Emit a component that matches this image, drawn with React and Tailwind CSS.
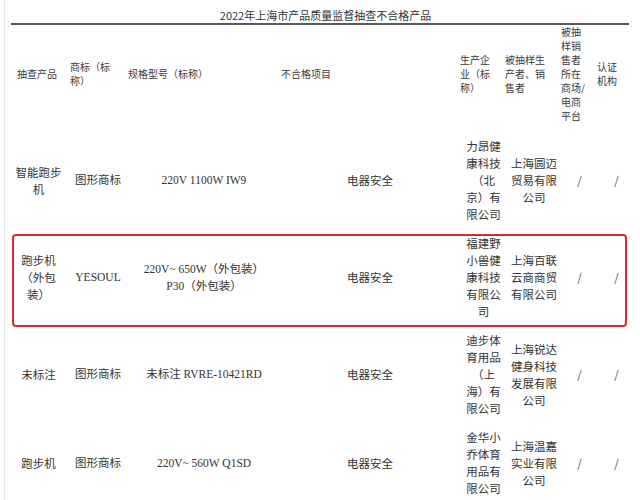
const SANS = { fontFamily: '"Noto Sans CJK SC", "Noto Sans", sans-serif' };

const rows = [
  {
    product: '智能跑步机',
    brand: '图形商标',
    spec: ['220V 1100W IW9'],
    item: '电器安全',
    maker: '力昂健康科技（北京）有限公司',
    seller: '上海圆迈贸易有限公司',
  },
  {
    product: '跑步机（外包装）',
    brand: 'YESOUL',
    spec: ['220V~ 650W（外包装）', 'P30（外包装）'],
    item: '电器安全',
    maker: '福建野小兽健康科技有限公司',
    seller: '上海百联云商商贸有限公司',
    marked: true,
  },
  {
    product: '未标注',
    brand: '图形商标',
    spec: ['未标注 RVRE-10421RD'],
    item: '电器安全',
    maker: '迪步体育用品（上海）有限公司',
    seller: '上海锐达健身科技发展有限公司',
  },
  {
    product: '跑步机',
    brand: '图形商标',
    spec: ['220V~ 560W Q1SD'],
    item: '电器安全',
    maker: '金华小乔体育用品有限公司',
    seller: '上海温嘉实业有限公司',
  },
];

function Row({ r }) {
  const cell = 'flex items-center justify-center text-center';
  return (
    <div className="relative">
      <div className="grid grid-cols-[55px_64px_148px_184px_43px_58px_33px_33px] py-[6px] text-[11.5px] leading-[17px] text-[#333]">
        <div className={`${cell} px-[3px]`} style={SANS}>{r.product}</div>
        <div className={cell} style={{ fontFamily: '"Liberation Serif", "Noto Sans CJK SC", serif' }}>
          {r.brand}
        </div>
        <div className={cell} style={{ fontFamily: '"Liberation Serif", "Noto Sans CJK SC", serif' }}>
          <div>
            {r.spec.map((s) => (
              <div key={s}>{s}</div>
            ))}
          </div>
        </div>
        <div className={cell} style={SANS}>{r.item}</div>
        <div className={`${cell} px-[2px]`} style={SANS}>{r.maker}</div>
        <div className={`${cell} px-[2px]`} style={SANS}>{r.seller}</div>
        <div className={`${cell} text-[#555]`} style={SANS}>/</div>
        <div className={`${cell} pl-2 text-[#555]`} style={SANS}>/</div>
      </div>
      {r.marked && (
        <div className="pointer-events-none absolute left-[1px] right-[2px] top-[5px] bottom-[-1px] rounded-[4px] border-2 border-[#d42a30]" />
      )}
    </div>
  );
}

export default function App() {
  return (
    <div className="h-[500px] w-[640px] overflow-hidden bg-white pl-[4px]">
      <div className="h-full border-l border-[#e8e8e8] pl-[6px]">
        <div className="w-[618px]">
          <div
            className="border-b-2 border-[#5a5a5a] pt-[8px] pb-[1px] pl-[11px] text-center text-[11px] leading-[14px] text-[#333]"
            style={SANS}
          >
            2022年上海市产品质量监督抽查不合格产品
          </div>

          <div
            className="flex pb-[9px] text-[10px] leading-[14px] text-[#3a3a3a]"
            style={SANS}
          >
            <div className="flex w-[59px] items-center pl-[6px]">抽查产品</div>
            <div className="flex w-[58px] items-center">
              <div className="w-[42px]">商标（标称）</div>
            </div>
            <div className="flex w-[153px] items-center">规格型号（标称）</div>
            <div className="flex w-[179px] items-center">不合格项目</div>
            <div className="flex w-[45px] items-center">
              <div className="w-[32px]">生产企业（标称）</div>
            </div>
            <div className="flex w-[56px] items-center">
              <div className="w-[42px]">被抽样生产者、销售者</div>
            </div>
            <div className="flex w-[36px] items-center">
              <div className="w-[26px]">被抽样销售者所在商场/电商平台</div>
            </div>
            <div className="flex w-[32px] items-center">
              <div className="w-[22px]">认证机构</div>
            </div>
          </div>

          {rows.map((r) => (
            <Row key={r.maker} r={r} />
          ))}
        </div>
      </div>
    </div>
  );
}
